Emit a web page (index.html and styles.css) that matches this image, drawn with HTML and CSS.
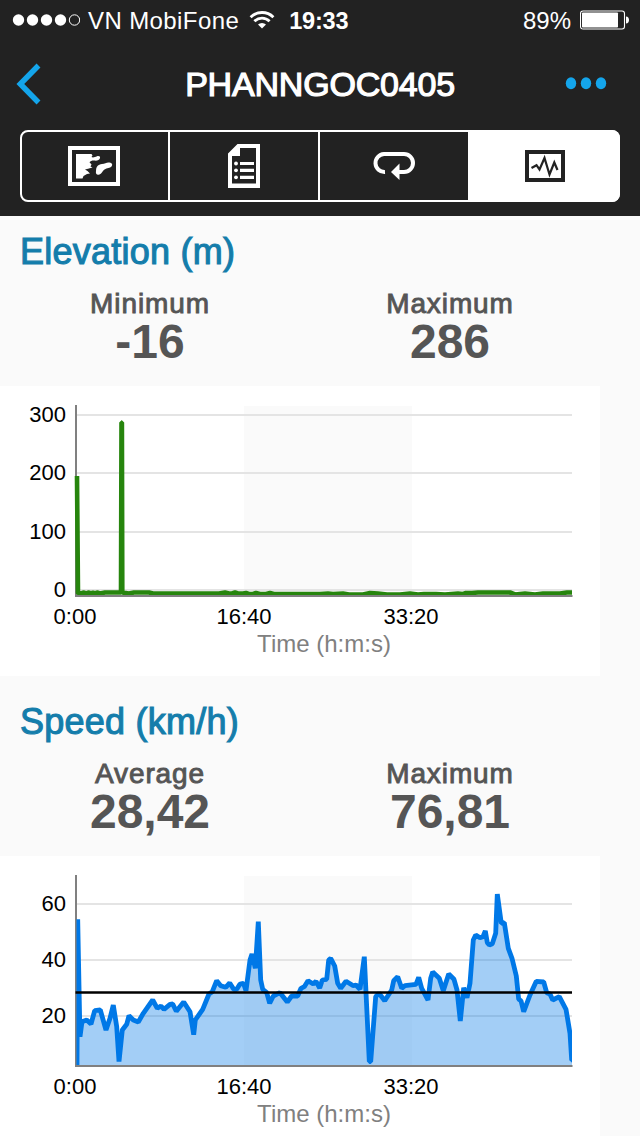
FILE: index.html
```
<!DOCTYPE html>
<html lang="en">
<head>
  <meta charset="UTF-8">
  <meta name="viewport" content="width=device-width, initial-scale=1.0">
  <title>PHANNGOC0405</title>
  <link rel="stylesheet" href="styles.css">
</head>
<body>

<!-- Header -->
<header class="header">
  <div class="status-bar">
    <svg class="signal" width="68" height="14" viewBox="0 0 68 14" fill="#fff">
      <circle cx="6.5" cy="7" r="5.7"/>
      <circle cx="20.500" cy="7" r="5.7"/>
      <circle cx="34.500" cy="7" r="5.7"/>
      <circle cx="48.500" cy="7" r="5.7"/>
      <circle cx="62.500" cy="7" r="5.2" fill="none" stroke="#fff"/>
    </svg>
    <span class="carrier">VN MobiFone</span>
    <svg class="wifi" width="26" height="20" viewBox="0 0 26 20" fill="none" stroke="#fff" stroke-width="2.8">
      <path d="M1.6 7.2A16.2 16.2 0 0 1 24.4 7.2"/>
      <path d="M5.4 11.2A10.8 10.8 0 0 1 20.6 11.2"/>
      <path d="M13 18.6L9 14.6A5.8 5.8 0 0 1 17 14.6Z" fill="#fff" stroke="none"/>
    </svg>
    <span class="clock">19:33</span>
    <span class="battery-text">89%</span>
    <svg class="battery" width="50" height="20" viewBox="0 0 50 20">
      <rect x="0.5" y="1" width="44" height="18" rx="2.5" fill="none" stroke="#fff" stroke-width="1.1"/>
      <rect x="2" y="2.5" width="36" height="15" rx="0.8" fill="#fff"/>
      <path d="M46 6.5c2 .2 3 1.500 3 3.500s-1 3.300-3 3.500z" fill="#fff"/>
    </svg>
  </div>

  <div class="nav-bar">
    <svg class="back" width="26" height="42" viewBox="0 0 26 42">
      <path d="M22.500 2.500L4.300 21L22.500 39.500" fill="none" stroke="#14a5eb" stroke-width="5.500"/>
    </svg>
    <h1>PHANNGOC0405</h1>
    <svg class="more" width="42" height="14" viewBox="0 0 42 14" fill="#14a5eb">
      <ellipse cx="6" cy="6.200" rx="5.2" ry="6"/>
      <ellipse cx="21" cy="6.200" rx="5.2" ry="6"/>
      <ellipse cx="36" cy="6.200" rx="5.2" ry="6"/>
    </svg>
  </div>

  <div class="tabs">
    <div class="tab">
      <svg width="52" height="40" viewBox="0 0 52 40">
        <rect x="2" y="2" width="48" height="36" fill="none" stroke="#fff" stroke-width="4"/>
        <path d="M8 8H23.500L24.500 9.500L23.500 11C25 12 27 11 29 10.300C31 9.700 32.500 10.500 32 12C31.500 14 29 15 26.500 14.600C24.500 14.300 22.500 15 21.500 16.200L23.500 18.500L22.500 20.500L24.500 21.500L20 22.800L17 23.500L19.500 25L22 27.500L19 28L15.500 30L14.500 32.500H8Z" fill="#fff"/>
        <path d="M28 25C28 20.500 30 18.500 34 18C37 17.500 39 16 41.500 16.500C44 17 45 18.500 43.500 20.500C42 22.300 39 21.800 36.500 23.500C34 25.300 33.500 28.500 30.500 28.800C28.500 29 27.500 27.500 28 25Z" fill="#fff"/>
      </svg>
    </div>
    <div class="tab">
      <svg width="32" height="44" viewBox="0 0 32 44">
        <path d="M9.500 0H32V44H0V9.500ZM12 4V12H4V39.500H28V4Z" fill="#fff" fill-rule="evenodd"/>
        <path d="M12 19.500H26M12 26.300H26M12 33.300H26" stroke="#fff" stroke-width="3.200"/>
        <circle cx="8" cy="19.500" r="1.900" fill="#fff"/>
        <circle cx="8" cy="26.300" r="1.900" fill="#fff"/>
        <circle cx="8" cy="33.300" r="1.900" fill="#fff"/>
      </svg>
    </div>
    <div class="tab">
      <svg width="42" height="28" viewBox="0 0 42 28">
        <path d="M12 20A9 9 0 0 1 11 2H31A9 9 0 0 1 31 20H25" fill="none" stroke="#fff" stroke-width="4"/>
        <path d="M18 20L26.500 11.500V28Z" fill="#fff"/>
      </svg>
    </div>
    <div class="tab active">
      <svg width="40" height="32" viewBox="0 0 40 32">
        <rect x="2" y="2" width="36" height="28" fill="none" stroke="#222" stroke-width="4"/>
        <path d="M6.500 18L11.500 15.200L14.500 19.500L19.500 8L24.500 24.500L29.300 12.500L32.500 20" fill="none" stroke="#222" stroke-width="2.200"/>
      </svg>
    </div>
  </div>
</header>

<!-- Elevation -->
<section class="metric">
  <h2>Elevation (m)</h2>
  <div class="stats">
    <div class="stat">
      <div class="label">Minimum</div>
      <div class="value">-16</div>
    </div>
    <div class="stat">
      <div class="label">Maximum</div>
      <div class="value">286</div>
    </div>
  </div>
  <svg class="chart" width="600" height="290" viewBox="0 0 600 290">
    <rect class="band" x="244" y="20" width="168" height="190"/>
    <path class="grid" d="M77 29H572M77 87H572M77 146H572M77 204H572"/>
    <path class="axis" d="M76 19V211"/>
    <path class="elevation-line" d="M77 90L78 207.500L82 207L84 206.500L86 207.500L89 206.500L91 207.500L93 206.500L95 207.500L97 206.500L100 207.500L105 206.500H121L121.500 36.500H121.900L122.300 206.500L129 207.500L134 206.500H149L153 207.500H219L225 206.500L229 207.500H232L235 206.500L238 207.500H243L246 207L249 208H253L256 207L260 208H266L270 207L274 208H320L328 207.500L333 208L343 207.500L349 208.500H363L370 207L378 207.500L387 208.500H400L410 207.500L418 208.500L424 208H436L445 208.500L458 207.500L463 208L466 207H472L478 206.500H510L515 208.500L525 207.500L535 208.500L543 207.500H560L567 206.500H572"/>
    <path class="axis" d="M75 210H572.500"/>
    <g class="y-labels">
      <text x="66" y="36">300</text>
      <text x="66" y="94">200</text>
      <text x="66" y="153">100</text>
      <text x="66" y="211">0</text>
    </g>
    <g class="x-labels">
      <text x="75" y="238">0:00</text>
      <text x="244" y="238">16:40</text>
      <text x="411" y="238">33:20</text>
    </g>
    <text class="axis-title" x="324" y="266">Time (h:m:s)</text>
  </svg>
</section>

<!-- Speed -->
<section class="metric">
  <h2>Speed (km/h)</h2>
  <div class="stats">
    <div class="stat">
      <div class="label">Average</div>
      <div class="value">28,42</div>
    </div>
    <div class="stat">
      <div class="label">Maximum</div>
      <div class="value">76,81</div>
    </div>
  </div>
  <svg class="chart" width="600" height="290" viewBox="0 0 600 290">
    <defs>
      <clipPath id="plot"><rect x="76.500" y="20" width="495.500" height="190"/></clipPath>
      <path id="speed" d="M77 210L77.700 63.300L80 180.700L82 165.700L86.700 164L91 168L94.700 154.700L100.300 154L106 174L110 162.300L113.300 149L116.700 170.700L119 205.500L122.300 174L126.700 168.300L129 159.700L133.300 164L138.300 166L143.300 157.300L152.700 144L157.300 152.300L161 150L164 153.300L170 148.300L172.700 148L176.300 155.300L183.700 146L190 155.700L193.700 178.700L195.300 164L202.700 153.300L209 138L212.300 135.700L216.700 124.700L220.700 129.700L225.700 131.300L229.700 127L233.700 133.300L236.700 133.300L240 128L243.500 127.300L246 134.700L250 104L252 98L255.300 112.300L258.300 65.700L260.700 124L262.700 133.300L266.700 136.700L269.700 147.300L273.300 140L280 136.700L287.300 146L291.700 140L297.700 140L301 132.300L304.300 130.700L308 124.700L313.300 128L316 125.300L319.700 132L322.300 124L326.700 123.300L328.700 104L330.700 102.300L334.700 110L337.700 127.300L340.700 132.300L346 125.300L353.300 129.700L356 129L360 133.300L364.300 100.700L369.300 205.500H370.700L375.700 140.700L379 137.300L384.700 144.700L391.700 134L393.700 124.700L397.700 120.700L401.700 132.300L405 129.700L416 128.300L418.700 121.300L421.700 132.300L428 144L430.700 122.300L432.700 116L439.300 122.300L443.300 134.700L448.700 118L454 123.300L457 134L460.300 165L463.700 131.700L467 141.700L470 127.300L473.300 84L475.700 79L480 81.700L483 80.700L485.300 75L487.300 86.700L489.300 89L492.300 87.700L495.700 77.300L497.300 38L501.300 67.300L504.300 66.700L508.300 92.300L512 102.300L516.300 120L518.700 143.300L521 144.700L523.700 155.700L530 139L536.300 125.300L543.700 126L546.700 136.700L550 138L552.700 144L559.300 140.700L566 153.300L570 177.300L571.700 204L576 204V210"/>
    </defs>
    <rect class="band" x="244" y="20" width="168" height="190"/>
    <path class="grid" d="M77 48H572M77 104H572M77 160H572"/>
    <path class="axis" d="M76 19V211"/>
    <g clip-path="url(#plot)">
      <use href="#speed" class="speed-area"/>
      <use href="#speed" class="speed-line"/>
    </g>
    <path class="axis" d="M75 210H572.500"/>
    <path class="average" d="M75.500 136.500H572"/>
    <g class="y-labels">
      <text x="66" y="55">60</text>
      <text x="66" y="111">40</text>
      <text x="66" y="167">20</text>
    </g>
    <g class="x-labels">
      <text x="75" y="238">0:00</text>
      <text x="244" y="238">16:40</text>
      <text x="411" y="238">33:20</text>
    </g>
    <text class="axis-title" x="324" y="266">Time (h:m:s)</text>
  </svg>
</section>

</body>
</html>
```
FILE: styles.css
```
/* Basic Styling */
html {
  height: 1136px;
  overflow: hidden;
}
body {
  font-family: "Liberation Sans", Arial, sans-serif;
  margin: 0;
  width: 640px;
  height: 1136px;
  overflow: hidden;
  background-color: #fafafa;
}
svg {
  display: block;
  flex: none;
}

/* Header */
.header {
  height: 216px;
  background-color: #222;
  color: #fff;
}
.status-bar {
  display: flex;
  align-items: center;
  height: 40px;
  padding: 0 10px 0 12px;
  font-size: 24px;
}
.status-bar span {
  padding-top: 2px;
}
.carrier {
  margin-left: 8px;
  letter-spacing: 0.4px;
}
.wifi {
  margin-left: 10px;
}
.clock {
  margin-left: 14px;
  font-weight: bold;
  font-size: 23.5px;
  letter-spacing: -0.2px;
}
.battery-text {
  margin-left: auto;
  margin-right: 9px;
}
.nav-bar {
  display: flex;
  align-items: center;
  justify-content: space-between;
  height: 88px;
  padding: 0 33px 0 16px;
}
.nav-bar h1 {
  margin: 0 0 0 33px;
  font-size: 34px;
  font-weight: normal;
  letter-spacing: -0.2px;
  -webkit-text-stroke: 1.2px #fff;
}

/* Segmented control */
.tabs {
  display: grid;
  grid-template-columns: 146px 150px 150px 150px;
  box-sizing: border-box;
  width: 600px;
  height: 72px;
  margin: 2px 20px 0;
  border: 2px solid #fff;
  border-radius: 8px;
}
.tab {
  display: flex;
  align-items: center;
  justify-content: center;
  border-left: 2px solid #fff;
}
.tab:first-child {
  border-left: none;
  padding-right: 2px;
}
.tab.active {
  margin: -2px -2px -2px 0;
  background-color: #fff;
  border-radius: 0 8px 8px 0;
}

/* Metric sections */
.metric {
  margin-bottom: 10px;
}
.metric h2 {
  margin: 0;
  padding: 12px 20px 13px;
  font-size: 36px;
  font-weight: normal;
  line-height: 48px;
  letter-spacing: 0.25px;
  color: #147dab;
  -webkit-text-stroke: 1.1px #147dab;
}
.stats {
  display: grid;
  grid-template-columns: 300px 300px;
  height: 97px;
  text-align: center;
  color: #555;
}
.label {
  font-size: 28px;
  line-height: 30px;
  letter-spacing: 0.9px;
  -webkit-text-stroke: 0.9px #555;
}
.value {
  font-size: 48px;
  font-weight: bold;
  line-height: 46px;
}

/* Charts */
.chart {
  background-color: #fff;
}
.band {
  fill: #fafafa;
}
.grid {
  stroke: #e4e4e4;
  stroke-width: 2;
}
.axis {
  stroke: #808080;
  stroke-width: 2;
}
.elevation-line {
  fill: none;
  stroke: #26850d;
  stroke-width: 4.6;
  stroke-linejoin: bevel;
}
.speed-area {
  fill: #0078e7;
  fill-opacity: 0.36;
}
.speed-line {
  fill: none;
  stroke: #0078e7;
  stroke-width: 4.8;
  stroke-linejoin: bevel;
}
.average {
  stroke: #000;
  stroke-width: 2.6;
}
.y-labels,
.x-labels {
  font-size: 22px;
}
.y-labels {
  text-anchor: end;
}
.x-labels {
  text-anchor: middle;
}
.axis-title {
  font-size: 24px;
  text-anchor: middle;
  fill: #808080;
}
```
